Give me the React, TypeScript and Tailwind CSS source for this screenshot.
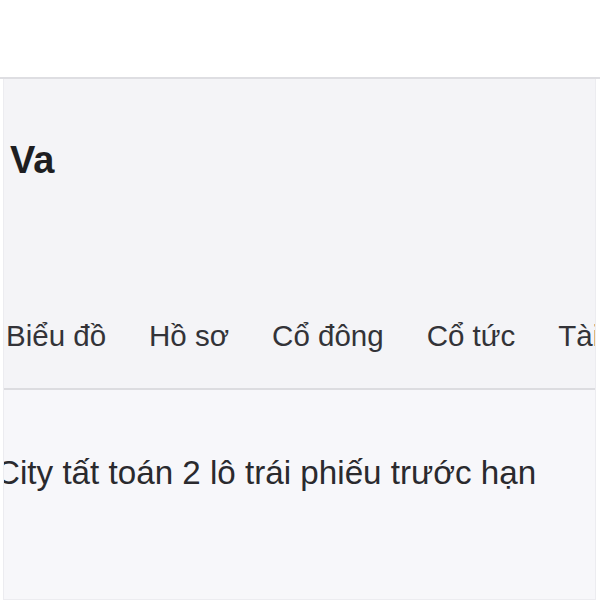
import React from "react";

export default function App() {
  const tabs = ["Biểu đồ", "Hồ sơ", "Cổ đông", "Cổ tức", "Tài chính"];
  return (
    <div
      className="w-[600px] h-[600px] overflow-hidden bg-white"
      style={{ fontFamily: '"Liberation Sans", Arial, sans-serif' }}
    >
      <div className="h-[77px] bg-white" />
      <div className="h-[2px] bg-[#dedee2]" />
      <div className="ml-[3px] mr-[4px] h-[521px] border-x border-[#ececf0] bg-[#f4f4f7] flex flex-col">
        <div className="pt-[59px] pl-[6px] h-[240px] shrink-0">
          <div className="text-[38px] leading-[44px] font-bold text-[#1e1e22]">Va</div>
        </div>
        <div className="h-[69px] shrink-0 flex flex-nowrap gap-[43px] pl-[2px] whitespace-nowrap overflow-hidden">
          {tabs.map((t) => (
            <div key={t} className="text-[29.5px] leading-[34px] text-[#333338] shrink-0">
              {t}
            </div>
          ))}
        </div>
        <div className="h-[2px] bg-[#dcdce0] shrink-0" />
        <div className="flex-1 bg-[#f7f7fa] pt-[64px] border-b border-[#ececf0] overflow-hidden">
          <div className="ml-[-8px] text-[33.2px] leading-[38px] text-[#2a2a2e] whitespace-nowrap">
            City tất toán 2 lô trái phiếu trước hạn
          </div>
        </div>
      </div>
    </div>
  );
}
